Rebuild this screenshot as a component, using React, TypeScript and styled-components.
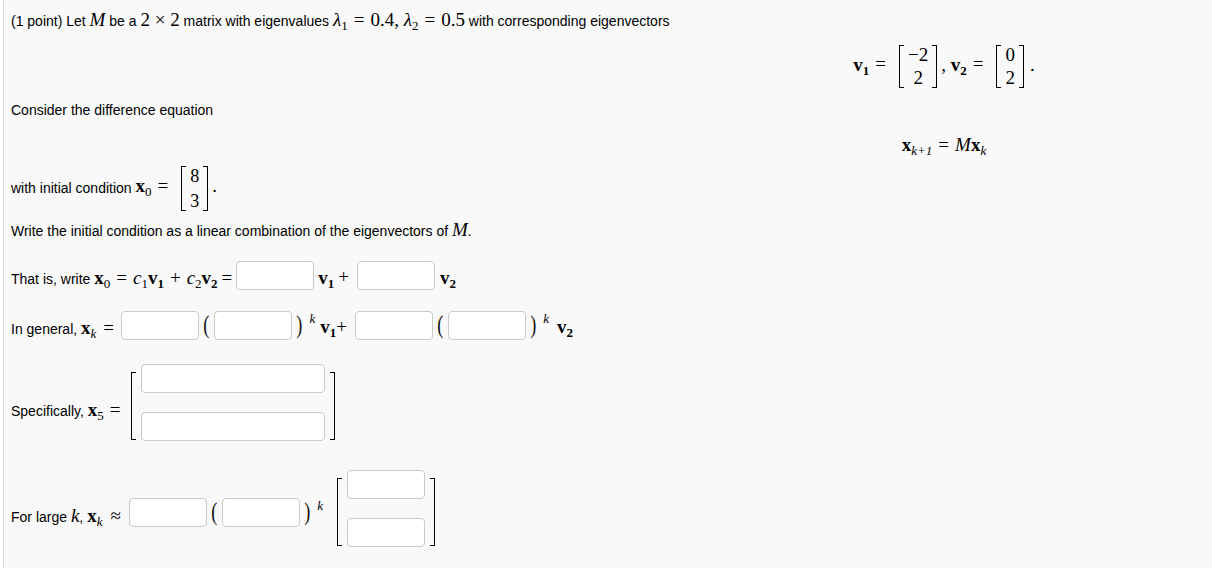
import React from "react";
import styled, { createGlobalStyle } from "styled-components";

const GlobalStyle = createGlobalStyle`
  html, body {
    margin: 0;
    padding: 0;
    background: #fff;
    overflow: hidden;
  }
  body {
    font-family: "Liberation Sans", Arial, sans-serif;
    font-size: 14px;
    color: #000;
  }
`;

const serif = `"Liberation Serif", "DejaVu Serif", serif`;

const Page = styled.div`
  padding-left: 3px;
`;

const Panel = styled.div`
  border-left: 1px solid #d6d6d6;
  background: #f9f9f9;
  padding: 10px 0 17px 7px;
  overflow: hidden;
`;

const Row = styled.div<{ $top: number; $h: number }>`
  display: flex;
  align-items: center;
  margin-top: ${(p) => p.$top}px;
  height: ${(p) => p.$h}px;
  white-space: nowrap;
`;

const DisplayRow = styled(Row)`
  width: 1866px;
  justify-content: center;
`;

const Text = styled.span<{ $drop?: number }>`
  padding-top: ${(p) => p.$drop ?? 0}px;
`;

const Mth = styled.span`
  font-family: ${serif};
  font-size: 19px;
`;

const I = styled.i`
  font-style: italic;
`;

const B = styled.b`
  font-weight: bold;
`;

const Sub = styled.span`
  font-size: 13px;
  vertical-align: -4px;
  line-height: 0;
  font-weight: normal;
`;

const BoldSub = styled(Sub)`
  font-weight: bold;
`;

const Sup = styled.span<{ $after?: number }>`
  font-size: 13px;
  font-style: italic;
  vertical-align: 10px;
  line-height: 0;
  margin: 0 ${(p) => p.$after ?? 3}px 0 3px;
`;

const Op = styled.span<{ $gap?: number }>`
  margin: 0 ${(p) => p.$gap ?? 6}px;
`;

const Matrix = styled.span<{ $left: number; $right: number }>`
  display: inline-flex;
  vertical-align: middle;
  align-items: stretch;
  margin: 0 ${(p) => p.$right}px 0 ${(p) => p.$left}px;
`;

const Bracket = styled.span<{ $side: "l" | "r" }>`
  width: 4px;
  border: 1.5px solid #000;
  ${(p) => (p.$side === "l" ? "border-right: none;" : "border-left: none;")}
`;

const Cells = styled.span<{ $gap: number; $pad: number; $size: number }>`
  display: flex;
  flex-direction: column;
  align-items: center;
  justify-content: center;
  gap: ${(p) => p.$gap}px;
  padding: 1px ${(p) => p.$pad}px;
  font-family: ${serif};
  font-size: ${(p) => p.$size}px;
  font-weight: normal;
  line-height: 18px;
`;

const Paren = styled.span`
  font-family: ${serif};
  font-size: 26px;
  font-weight: 300;
  line-height: 1;
  transform: scaleX(0.7);
  margin: 0 3px;
  color: #111;
`;

const Answer = styled.input<{ $w: number }>`
  width: ${(p) => p.$w}px;
  height: 29px;
  box-sizing: border-box;
  border: 1px solid #c9c9c9;
  border-radius: 4px;
  background: #fff;
  padding: 0 4px;
  margin: 0;
  font-size: 14px;
`;

const BoxColumn = styled.span`
  display: flex;
  flex-direction: column;
  gap: 19px;
  padding: 0 5px;
  margin: -8px 0 -1px;
`;

const Vec = ({ n }: { n: string }) => (
  <>
    <B>v</B>
    <BoldSub>{n}</BoldSub>
  </>
);

const X = ({ sub, italic }: { sub: string; italic?: boolean }) => (
  <>
    <B>x</B>
    <Sub>{italic ? <I>{sub}</I> : sub}</Sub>
  </>
);

const Column = ({
  items,
  gap = 5,
  pad = 4,
  size = 19,
  left = 7,
  right = 4,
}: {
  items: string[];
  gap?: number;
  pad?: number;
  size?: number;
  left?: number;
  right?: number;
}) => (
  <Matrix $left={left} $right={right}>
    <Bracket $side="l" />
    <Cells $gap={gap} $pad={pad} $size={size}>
      {items.map((v, i) => (
        <span key={i}>{v}</span>
      ))}
    </Cells>
    <Bracket $side="r" />
  </Matrix>
);

const BoxMatrix = ({ w }: { w: number }) => (
  <Matrix $left={4} $right={4}>
    <Bracket $side="l" />
    <BoxColumn>
      <Answer $w={w} />
      <Answer $w={w} />
    </BoxColumn>
    <Bracket $side="r" />
  </Matrix>
);

export default function App() {
  return (
    <Page>
      <GlobalStyle />
      <Panel>
        <Row $top={0} $h={20}>
          <span>
            (1 point) Let{" "}
            <Mth>
              <I>M</I>
            </Mth>{" "}
            be a <Mth>2 × 2</Mth> matrix with eigenvalues{" "}
            <Mth>
              <I>λ</I>
              <Sub>1</Sub>
              <Op>=</Op>0.4, <I>λ</I>
              <Sub>2</Sub>
              <Op>=</Op>0.5
            </Mth>{" "}
            with corresponding eigenvectors
          </span>
        </Row>

        <DisplayRow $top={11} $h={50}>
          <Mth>
            <Vec n="1" />
            <Op>=</Op>
            <Column items={["−2", "2"]} />, <Vec n="2" />
            <Op>=</Op>
            <Column items={["0", "2"]} right={6} />.
          </Mth>
        </DisplayRow>

        <Row $top={9} $h={20}>
          <span>Consider the difference equation</span>
        </Row>

        <DisplayRow $top={15} $h={20}>
          <Mth>
            <X sub="k+1" italic />
            <Op>=</Op>
            <I>M</I>
            <X sub="k" italic />
          </Mth>
        </DisplayRow>

        <Row $top={11} $h={44}>
          <span>
            with initial condition{" "}
            <Mth>
              <X sub="0" />
              <Op>=</Op>
              <Column items={["8", "3"]} gap={7} pad={4} size={18} left={7} right={4} />.
            </Mth>
          </span>
        </Row>

        <Row $top={10} $h={20}>
          <span>
            Write the initial condition as a linear combination of the eigenvectors of{" "}
            <Mth>
              <I>M</I>
            </Mth>
            .
          </span>
        </Row>

        <Row $top={20} $h={30}>
          <Text $drop={6}>
            That is, write{" "}
            <Mth>
              <X sub="0" />
              <Op>=</Op>
              <I>c</I>
              <Sub>1</Sub>
              <Vec n="1" />
              <Op>+</Op>
              <I>c</I>
              <Sub>2</Sub>
              <Vec n="2" />
              <Op $gap={4}>=</Op>
            </Mth>
          </Text>
          <Answer $w={78} />
          <Text $drop={6}>
            <Mth>
              <Op $gap={4}>
                <Vec n="1" />
              </Op>
            </Mth>
          </Text>
          <Text $drop={4}>
            <Mth>+</Mth>
          </Text>
          <Op $gap={4} />
          <Answer $w={78} />
          <Text $drop={6}>
            <Mth>
              <Op $gap={5}>
                <Vec n="2" />
              </Op>
            </Mth>
          </Text>
        </Row>

        <Row $top={20} $h={30}>
          <Text $drop={6}>
            In general,{" "}
            <Mth>
              <X sub="k" italic />
              <Op $gap={7}>=</Op>
            </Mth>
          </Text>
          <Answer $w={78} />
          <Paren>(</Paren>
          <Answer $w={78} />
          <Paren>)</Paren>
          <Text $drop={4}>
            <Mth>
              <Sup $after={5}>k</Sup>
              <Vec n="1" />+
            </Mth>
          </Text>
          <Op $gap={4} />
          <Answer $w={78} />
          <Paren>(</Paren>
          <Answer $w={78} />
          <Paren>)</Paren>
          <Text $drop={4}>
            <Mth>
              <Sup $after={8}>k</Sup>
              <Vec n="2" />
            </Mth>
          </Text>
        </Row>

        <Row $top={26} $h={80}>
          <Text $drop={8}>
            Specifically,{" "}
            <Mth>
              <X sub="5" />
              <Op $gap={6}>=</Op>
            </Mth>
          </Text>
          <BoxMatrix w={184} />
        </Row>

        <Row $top={27} $h={78}>
          <Text $drop={8}>
            For large{" "}
            <Mth>
              <I>k</I>
            </Mth>
            ,{" "}
            <Mth>
              <X sub="k" italic />
              <Op $gap={8}>≈</Op>
            </Mth>
          </Text>
          <Answer $w={78} />
          <Paren>(</Paren>
          <Answer $w={78} />
          <Paren>)</Paren>
          <Text $drop={4}>
            <Mth>
              <Sup $after={10}>k</Sup>
            </Mth>
          </Text>
          <BoxMatrix w={78} />
        </Row>
      </Panel>
    </Page>
  );
}
